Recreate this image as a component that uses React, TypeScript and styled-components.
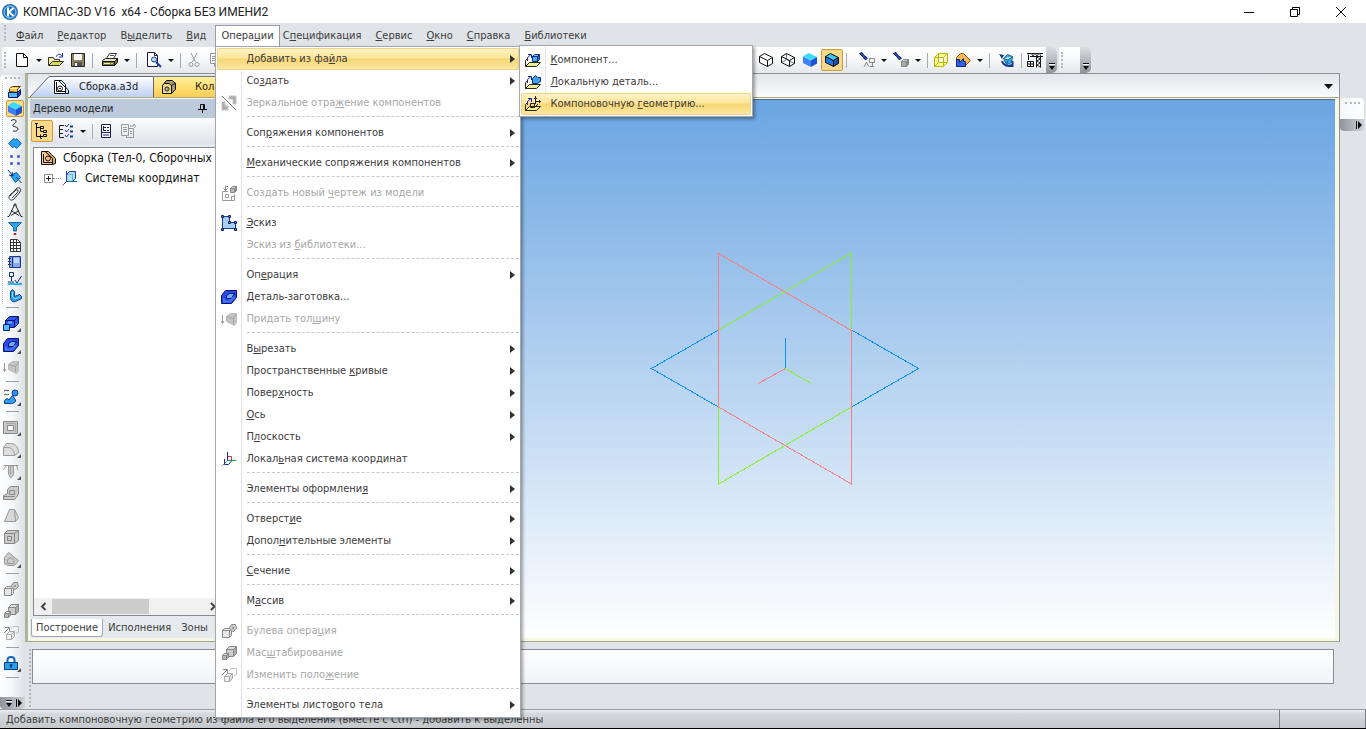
import React from 'react';
import styled, { createGlobalStyle, css } from 'styled-components';

const uiFont = '"DejaVu Sans Condensed", "DejaVu Sans", sans-serif';
const titleFont = 'Roboto, "Noto Sans", sans-serif';

const GlobalStyle = createGlobalStyle`
  * { box-sizing: border-box; }
  body { margin: 0; background: #e0e4e8; }
  button { font: inherit; color: inherit; background: none; border: 0; padding: 0; margin: 0; }
  ul { list-style: none; margin: 0; padding: 0; }
  u { text-decoration: underline; text-underline-offset: 1px; text-decoration-thickness: 1px; }
`;

/* ---------- icons ---------- */

const P = ({ d, f = 'none', s = '#111', w = 1 }: { d: string; f?: string; s?: string; w?: number }) => (
  <path d={d} fill={f} stroke={s} strokeWidth={w} />
);

const box = (x: number, y: number, n: number, d: number, f: string, t: string, r: string, l: string) => (
  <>
    <P d={`M${x} ${y} h${n} v${n} h-${n} Z`} f={f} s={l} />
    <P d={`M${x} ${y} l${d} -${d} h${n} l-${d} ${d} Z`} f={t} s={l} />
    <P d={`M${x + n} ${y} l${d} -${d} v${n} l-${d} ${d} Z`} f={r} s={l} />
  </>
);

const G = '#9a9a9a';

const openFolder = (
  <P d="M.5 14.5 V8.5 L2.5 6.5 M.5 14.5 L4.5 10.5 H15.5 L11.5 14.5 Z" f="#eeee98" s="#2b2b10" />
);

const insertArrow = <P d="M2.5 9 V5.5 L6 2.5 M3 2.5 H6.5 V6" s="#14249c" />;

const icons: Record<string, React.ReactNode> = {
  fileNew: <P d="M2.5 1.5 H9.5 L13.5 5.5 V14.5 H2.5 Z M9.5 1.5 V5.5 H13.5" f="#fff" />,
  open: (
    <>
      <P d="M.5 13.5 V5.5 H5.5 L6.5 7.5 H11.5 V9.5" f="#f4f0a0" s="#333" />
      <P d="M.5 13.5 L4.5 9.5 H15.5 L11.5 13.5 Z" f="#d8d860" s="#333" />
      <P d="M8.5 4.5 C9.5 1.5 12.5 1.5 14.5 4.5 M14.5 1 V5 H11" s="#1428b4" />
    </>
  ),
  save: (
    <>
      <P d="M1.5 1.5 H14.5 V14.5 H1.5 Z" f="#8a8458" s="#222" />
      <P d="M4 2 H12 V8 H4 Z" f="#f4f4f4" s="none" />
      <P d="M4 10 H12 V14 H4 Z" f="#555" s="none" />
      <P d="M5 11 H7 V14 H5 Z" f="#eee" s="none" />
    </>
  ),
  print: (
    <>
      <P d="M4.5 6.5 L7.5 1.5 H14.5 L11.5 6.5 Z" f="#fff" s="#333" />
      <P d="M.5 8.5 L3.5 6.5 H15.5 L12.5 9.5 H.5 Z" f="#e8e8c0" s="#222" />
      <P d="M.5 9.5 H12.5 V13.5 H.5 Z M12.5 9.5 L15.5 6.5 V10.5 L12.5 13.5" f="#777740" s="#111" />
      <P d="M2 11.5 H8" s="#f0f0b0" />
      <P d="M9 11.5 H11" s="#e8d820" />
      <P d="M8 3.5 H12" s="#555" />
    </>
  ),
  preview: (
    <>
      <P d="M1.5 .5 H8.5 L11.5 3.5 V14.5 H1.5 Z M8.5 .5 V3.5 H11.5" f="#fff" s="#1a1a4a" />
      <P d="M5.5 7.5 a2.5 2.5 0 1 0 5 0 a2.5 2.5 0 1 0 -5 0" f="#b8dcff" s="#203c90" />
      <P d="M10 10 L15 15" s="#203c90" w={2} />
    </>
  ),
  cut: (
    <>
      <P d="M5 1 L9.5 10 M11 1 L6.5 10" s={G} />
      <P d="M3 12.5 a2 2 0 1 0 4 0 a2 2 0 1 0 -4 0 M9 12.5 a2 2 0 1 0 4 0 a2 2 0 1 0 -4 0" s={G} />
    </>
  ),
  copy: <P d="M2.5 1.5 H9.5 V11.5 H2.5 Z M4 4.5 H8 M4 6.5 H8 M4 8.5 H8 M9.5 4.5 H13.5 V14.5 H6.5 V12" s={G} />,
  wire: <P d="M1.5 4.5 L6.5 1.5 L14.5 5.5 V11.5 L9.5 14.5 L1.5 10.5 Z M1.5 4.5 L9.5 8.5 V14.5 M9.5 8.5 L14.5 5.5" f="#fff" />,
  wireThin: (
    <>
      <P d="M1.5 10.5 L6.5 7.5 L14.5 11.5 M6.5 7.5 V1.5" s="#777" />
      <P d="M1.5 4.5 L6.5 1.5 L14.5 5.5 V11.5 L9.5 14.5 L1.5 10.5 Z M1.5 4.5 L9.5 8.5 V14.5 M9.5 8.5 L14.5 5.5" />
    </>
  ),
  shaded: (
    <>
      <P d="M1 4.5 L9 8.5 V15 L1 11 Z" f="#3c80f4" s="none" />
      <P d="M1 4.5 L6.5 1 L15 5 L9 8.5 Z" f="#38dcfa" s="none" />
      <P d="M9 8.5 L15 5 V11.5 L9 15 Z" f="#1c50d0" s="none" />
    </>
  ),
  shadedEdges: (
    <>
      <P d="M1.5 4.5 L9.5 8.5 V14.5 L1.5 10.5 Z" f="#2476e8" />
      <P d="M1.5 4.5 L6.5 1.5 L14.5 5.5 L9.5 8.5 Z" f="#38c8f0" />
      <P d="M9.5 8.5 L14.5 5.5 V11.5 L9.5 14.5 Z" f="#1850b8" />
    </>
  ),
  lampText: (
    <>
      <P d="M.5 1.5 L3 .5 L5 3.5 L8.5 6 L6.500 8 L3.500 4.500 Z" f="#2448b0" s="#102878" />
      <P d="M10.5 6.5 H15.5 V10.5 H10.5 Z M13.5 10.5 V15 M10.500 14.500 H15 M5 15 L7.500 10 L9.5 14" s="#888" />
    </>
  ),
  lampCube: (
    <>
      <P d="M.5 1.5 L3 .5 L5 3.5 L8.500 6 L6.500 8 L3.500 4.500 Z" f="#2448b0" s="#102878" />
      {box(8.5, 9.5, 5, 2, '#aaa', '#ccc', '#888', '#888')}
    </>
  ),
  yellowBox: <P d="M1.5 5.5 H10.5 V14.5 H1.5 Z M1.5 5.5 L5.5 1.5 H14.5 L10.5 5.5 M14.5 1.5 V10.5 L10.5 14.5 M5.5 1.5 V10.5 H14.5 M1.5 14.5 L5.5 10.5" f="#fcfc90" s="#bcb800" />,
  sectionView: (
    <>
      <P d="M1.5 14.5 V5.5 L5.5 1.5 H8.5 L15.5 8.5 L9.5 14.5 Z" f="#f4b850" s="#8a5410" />
      <P d="M1.5 14.5 V7.5 H4.5 V10.5 L8.5 6.5 V9.500 H10.500 V14.5 Z" f="#3060e0" s="#102880" />
    </>
  ),
  rotate: (
    <>
      <P d="M4.5 6.5 L8.5 2.5 L13.5 4.5 L12.5 10.5 L7.5 12.5 Z M4.500 6.500 L9 8 L13.500 4.500 M9 8 L7.500 12.500" f="#38a8ec" s="#1464a8" />
      <P d="M0 2 L5 3 L3 7 Z" f="#123f8c" s="none" />
      <P d="M3 9 C4 13 8 15 13 13 M13.500 9 V14 H9" s="#123f8c" w={2} />
    </>
  ),
  crane: (
    <>
      <P d="M1.5 8 V2.5 M0 1.500 H16 M3 4.500 H16" />
      <P d="M9.5 4 V15.500 M13.5 4 V15.500" />
      <P d="M9.500 5 L13.500 7 L9.500 9 L13.500 11 L9.500 13 L13.500 15 M4 1 L6 4 L8 1 L10 4 L12 1 L14 4" s="#333" />
      <P d="M.5 9.5 H6.5 V14.5 H.5 Z M3.5 9.5 V14.5 M.5 12 H6.5" f="#fff" />
    </>
  ),
  assembly: (
    <>
      <P d="M1.5 14.5 V1.5 H5.5 L12.5 8.5 V14.5 Z" f="#fff" />
      <P d="M4.5 9.5 a2.5 2.5 0 1 0 5 0 a2.5 2.5 0 1 0 -5 0 M6 9.5 H8" f="#fff" />
      <P d="M5 1.500 H8.5 L12.500 5.500 V8 L15.5 11.500 V14.5 H12.5 M3.5 3 V12.5 H12" />
    </>
  ),
  assemblyTree: (
    <>
      <P d="M1.5 14.5 V1.5 H5.5 L12.5 8.5 V14.5 Z" f="#f4c890" />
      <P d="M5 1.500 H8.5 L11.500 4.500 L15.5 8.500 V13.5 L12.5 14.500 V8.500 Z" f="#e4a868" />
      <P d="M5.5 8.5 a2.500 2.500 0 1 0 5 0 a2.500 2.500 0 1 0 -5 0" f="#f0c080" />
      <P d="M3.5 4 V12.5 H12" />
    </>
  ),
  part: (
    <>
      <P d="M1.5 14.5 V6.5 L5.5 1.5 H11.5 L14.5 4.5 V10.5 L10.5 14.5 Z" f="#a89868" />
      <P d="M1.5 14.500 V6.5 L3.500 4.5 H8 L10.5 6.5 V14.5 Z M10.5 6.5 L14.5 4" f="#f0d878" />
      <P d="M4 10 a2 2 0 1 0 4 0 a2 2 0 1 0 -4 0 M5.500 10 H7" f="#fff" />
    </>
  ),
  tree: <P d="M1 .500 H4 M2.5 1 V13.5 H6 M2.5 4.5 H6 M6.500 3 V8 M6.500 8.500 H9 M6.500 3.500 H9.500 V5.500 H6.500 M9.5 7.5 H12.5 V9.5 H9.5 Z M9.500 11.500 H12.500 V13.500 H9.500 Z M6.5 11.5 V15.500 H8 M6.500 13.500 H9" />,
  checklist: (
    <>
      <P d="M6 2.5 H1.5 V14.5 H6 M1.5 6.5 H5 M1.5 10.5 H5" s="#222" />
      <P d="M7 2 L8.5 4 L11 1 M7 7 L8.5 9 L11 6 M7 12 L8.5 14 L11 11" s="#203c90" />
      <P d="M12 3.5 H15 M12 8.5 H15 M12 13.5 H15" s="#203c90" w={2} />
    </>
  ),
  docTree: (
    <>
      <P d="M3.5 1.5 H12.5 V14.5 H3.5 Z" f="#fff" s="#181860" />
      <P d="M3.5 9.5 H12.5 M5.5 3 V7.5 H8 M5.5 4.5 H8 M9 4.5 H11 M9 7.5 H11 M5 12 H11" s="#181860" />
    </>
  ),
  docCopy: <P d="M1.5 1.5 H8.5 V12.5 H1.5 Z M3 4.5 H7 M3 6.5 H7 M3 8.5 H7 M8.5 5.5 H13.5 V14.5 H6.5 V13 M10 8.5 H12 M10 10.5 H12 M10 3 H14 V1 L15.5 3.5 L14 5" s={G} />,
  coords: (
    <>
      <P d="M4.5 4.5 L7.5 1.5 H13.5 V8.5 L10.5 11.5 H4.5 Z" f="#b0e0f8" s="#1840a0" />
      <P d="M4.500 4.500 H10.500 V11.500" s="#70a8d8" />
      <P d="M4.5 12 V1" s="#1840c0" />
      <P d="M4.5 11.5 H15" s="#107878" />
      <P d="M4.5 11.5 L.5 15.5" s="#b030a0" />
    </>
  ),
  block: (
    <>
      <P d="M2.500 7.500 V4.500 L5.5 2.5 H13.5 L10.5 5 V8.500 Z" f="#f8c850" s="#583800" />
      <P d="M2.500 4.500 H10.500" s="#fff0a0" />
      <P d="M1.5 8.5 H10.5 V13.5 H1.5 Z" f="#50b8f8" s="#0c1850" />
      <P d="M10.5 8.5 L13.5 5.5 V10.5 L10.5 13.5 Z" f="#2848c8" s="#0c1850" />
    </>
  ),
  curve: <P d="M4 3 C5 1 10 1 9 4 C8 6 5 6 6 8 C8 9 11 9 11 11 C10 14 7 13 6 13" s="#222" />,
  surface: <P d="M1.5 8.5 L6.5 3.5 L8.5 4.5 L9.5 3.5 L14.5 8.5 L9.5 13.5 L7.5 11.5 L5.5 12.5 Z" f="#28a0f0" s="#1868c0" />,
  points: (
    <P d="M3.500 3.500 h2 v2 h-2 Z M10.500 3.500 h2 v2 h-2 Z M3.500 10.500 h2 v2 h-2 Z M10.500 10.500 h2 v2 h-2 Z" f="#2838b0" s="#6878e0" />
  ),
  mate: (
    <>
      <P d="M3.5 6.5 L9.5 3.5 L13.5 8.5 L8.5 13.5 Z" f="#28a8f0" s="#1060a8" />
      <P d="M1 1 L6 7 M14.5 14 L9 8 M5 3 L6 7 L2 6" s="#14307c" />
    </>
  ),
  clip: <P d="M3 10 L9 3 C12 0 15 3 13 6 L7 13 C4 16 0 12 3 9 L9 4 C11 3 12 5 10 7 L5 12" s="#333" />,
  compass: <P d="M7.500 2 L2 13.500 H.500 M8.500 2 L14 13.500 H15.500 M6.500 2.5 L8 .5 L9.500 2.5 M4 7.500 L12 12.500 M12 7.500 L4 12.500" s="#222" />,
  filter: (
    <>
      <P d="M1.5 2.5 H14.5 L9.5 7.5 V11 H6.5 V7.5 Z" f="#30a0e8" s="#1868b0" />
      <P d="M7 13.5 h2 v1 h-2 Z" f="#e04040" s="#c02020" />
    </>
  ),
  grid: (
    <P d="M3.5 2.5 H10.5 L13.5 5.5 V14.5 H3.5 Z M3.5 5.5 H13.5 M3.5 8.5 H13.5 M3.5 11.5 H13.5 M6.5 3 V14 M9.5 3 V14" f="#fff" s="#333" />
  ),
  book: (
    <>
      <P d="M2.5 2.5 H13.5 V13.5 H2.5 Z" f="#88a8f0" s="#20388c" />
      <P d="M5.5 2.5 V13.5" s="#20388c" />
      <P d="M1 4.5 H4 M1 7.5 H4 M1 10.5 H4" s="#333" />
      <P d="M7 4 H12 V9 H7 Z" f="#c4d8fc" s="none" />
    </>
  ),
  measure: (
    <>
      <P d="M2.5 1.5 H6.5 V5.5 H2.5 Z M4.5 6 V10 M1 11 H7 M8 9 L10 12 L14.5 5" s="#182c80" />
      <P d="M1 13.5 C5 11 9 15 15 12.5" s="#28b0e8" w={2} />
    </>
  ),
  bend: (
    <>
      <P d="M3.5 3.500 L5.5 1.5 L7.500 3.500 V8.5 L12.5 6.5 L14.500 8.500 V10.5 L8.5 13.500 C4.5 14.5 3.5 11.5 3.5 9.5 Z" f="#28a0f0" s="#103890" />
      <P d="M5.500 4 V9 L8 11 L13 9" s="#90d8ff" />
    </>
  ),
  extrude: (
    <>
      <P d="M2.500 5.500 L6.500 1.500 H15.500 V8.500 L11.500 12.500 H2.500 Z" f="#2c58ec" s="#081070" />
      <P d="M2.500 5.500 H11.500 V12 M11.500 5.500 L15.500 1.500" s="#081070" />
      <P d="M5 7.500 H9" s="#60b8ff" w={2} />
      <P d="M.5 9.5 H6.5 V15.5 H.5 Z" f="#48c4f8" s="#0c1890" />
    </>
  ),
  blank: (
    <>
      <P d="M.5 6.5 L4.5 1.5 H15.500 V8.5 L10.5 14.5 H.5 Z" f="#2848e8" s="#081070" />
      <P d="M5.5 6.500 L8.500 4.5 H13.5 L10.5 9.5 H5.500 Z" f="#68b0f8" s="#081070" />
      <P d="M3 9.500 V12.500 H9 L13 8" s="#4078f8" w={2} />
    </>
  ),
  thick: (
    <>
      <P d="M1.5 4 V12 M0 10 L1.5 12.5 L3 10" s={G} />
      <P d="M5.5 5.5 L9.5 2.5 H15.5 V11.5 L13.5 14.5 L5.5 10.5 Z" f="#c4c4c4" s="#bbb" />
      <P d="M5.5 5.5 L12.5 7.5 L15.5 3 M12.5 7.5 V13" s="#a4a4a4" />
    </>
  ),
  loft: (
    <>
      <P d="M1 2 C3 0 5 3 6 1 M1 6 C3 4 4 7 6 5" s="#444" />
      <P d="M9 4 a3 3 0 1 0 6 0 a3 3 0 1 0 -6 0" f="#2890f0" s="#104090" />
      <P d="M1.5 14.5 V11.500 L4 9.500 L6 11 L9.5 6.5 L12.500 11 C13 14 9 15 6 14.5 Z" f="#30a0f0" s="#103c90" />
    </>
  ),
  window: (
    <>
      <P d="M.5 2.5 H14.5 V14.5 H.5 Z" f="#c8c8c8" s="#888" />
      <P d="M4.5 6.500 H10.5 V11.5 H4.5 Z" f="#f4f4f4" s="#888" />
      <P d="M3 4.500 H12.500 V13" s="#aaa" />
    </>
  ),
  fillet: <P d="M.5 14.5 V6.5 L3.500 2.500 H7.500 C12.500 2.500 15.500 6.500 15.500 11.500 L11.500 14.5 Z M.5 6.5 H4.5 C8.5 6.5 11.5 9.5 11.5 14.5" f="#ddd" s="#999" />,
  hole: <P d="M.5 2.5 H15.5 M.5 6.5 L3.5 2.5 M5.5 3 V11.5 L8 15 L10.5 11.5 V3 Z M13.5 3 L15 7 M7.500 4 V11" f="#ccc" s={G} />,
  rib: <P d="M.5 10.5 L4.5 8.5 V4.5 L7.5 1.5 H15.5 V9.5 L11.5 14.5 H.5 Z M6.5 5.500 H11.5 V9.5 H6.5 Z M.5 11.5 H11.5" f="#ccc" s="#888" />,
  draft: <P d="M1.5 14.5 L6.5 2.5 H11.5 L15.5 10.5 L12.5 14.5 Z M11.5 2.5 L12.5 14" f="#d8d8d8" s="#999" />,
  shell: <P d="M1.5 4.5 L4.5 1.5 H15.5 V11.5 L11.5 14.5 H1.5 Z M1.5 4.5 H11.5 V14.5 M11.5 4.5 L15.5 1.5 M4.5 7.5 H8.5 V11.5 H4.5 Z" f="#ccc" s="#888" />,
  cutPlane: <P d="M1.5 12.5 V6.5 L5.5 1.5 L15.5 9.5 L11.5 14.5 H4.5 Z M4.5 8.5 L8 6.5 L11 9.5 V12.5 H4.5 Z" f="#ccc" s="#999" />,
  boolean: (
    <>
      <P d="M1.5 7.5 L3.5 5.5 H10.5 V12.5 L8.5 14.5 H1.5 Z M1.5 7.5 H8.5 V14" f="#e8e8e8" s="#888" />
      <P d="M8.5 4.5 L10.5 1.5 L14.5 1.5 L15.5 5.5 L12.5 8.5 L9.5 7.5 Z M11.500 4.500 h1 v1 h-1 Z" f="#ccc" s="#888" />
    </>
  ),
  scale: (
    <>
      {box(5.5, 4.5, 7, 3, '#ccc', '#ddd', '#aaa', '#888')}
      {box(1.5, 10.5, 4, 2, '#bbb', '#ddd', '#aaa', '#888')}
    </>
  ),
  move: (
    <>
      <P d="M1 8 L6 3 M2 2.500 H6.500 V7" s="#888" />
      <P d="M8.5 3.5 L10 1.500 H15.5 V7.5 L13 8.500" s="#bbb" />
      {box(3.5, 9.5, 5, 3, '#eee', '#eee', '#ddd', '#aaa')}
    </>
  ),
  lock: (
    <>
      <P d="M4.5 8 V5 C4.5 1 11.5 1 11.5 5 V8" s="#1868b8" w={2} />
      <P d="M1.5 7.5 H14.5 V14.5 H1.5 Z" f="#28a0f4" s="#103c80" />
      <P d="M6.500 10 H9.500 M8 10 V13" s="#111" />
    </>
  ),
  mirror: (
    <>
      <P d="M1 1 L15 15" s="#777" />
      <P d="M8 1 H15 V9 H12 V4 H8 Z M1 7 H4 V11 H7 V15 H1 Z" f="#aaa" s="#c4c4c4" />
    </>
  ),
  drawing: (
    <>
      {box(9.5, 3.5, 4, 2, '#bbb', '#ddd', '#999', '#888')}
      <P d="M7 1.500 H4.500 V5 M2.5 3.5 L4.500 5.5 L6.5 3.5" s="#888" />
      <P d="M1.5 6.500 H7 M1.5 6.5 V15.5 H13.5 V9 M4.5 9.5 H7.5 V12.5 H4.5 Z M10 11.5 H13 M10.500 11.5 V15" s="#999" />
    </>
  ),
  sketch: (
    <>
      <P d="M1.5 1.5 H8.5 V7.5 H14.5 V13.5 H1.5 Z" f="#a8d0f4" s="#203c90" />
      <P d="M.500 .500 h2 v2 h-2 Z M7.5 .5 h2 v2 h-2 Z M7.5 6.5 h2 v2 h-2 Z M13.5 6.5 h2 v2 h-2 Z M13.5 13.5 h2 v2 h-2 Z M.5 13.5 h2 v2 h-2 Z" f="#5888e0" s="#10205c" />
    </>
  ),
  lcs: (
    <>
      <P d="M6.500 9.500 L1 15" s="#888" />
      <P d="M6.500 9.500 H15.500" s="#20a040" />
      <P d="M6.500 5.500 H10.500 V9.500" s="#d03050" />
      <P d="M6.500 1 V9.500 M3.500 8 V13.500 H7.500 L10.500 10" s="#1828a0" />
    </>
  ),
  addComponent: (
    <>
      {openFolder}
      {insertArrow}
      {box(7.5, 4.5, 5, 2, '#50b0f8', '#80d0ff', '#2068c8', '#102c80')}
    </>
  ),
  addLocal: (
    <>
      {openFolder}
      {insertArrow}
      <P d="M7.5 4.5 L10.5 1.5 L12.5 3.5 L15.5 3.5 V7.5 L12.5 9.5 H7.5 Z" f="#40a0f4" s="#102c80" />
    </>
  ),
  addLayout: (
    <>
      {openFolder}
      {insertArrow}
      <P d="M5.5 7.5 H9.5 V11.5 H5.5 Z M10.5 8 V0 M9 2.5 H12 M10 5.5 H16 M14.500 4 V7 M9.500 11.500 L13 8" s="#222" />
    </>
  ),
};

const IconSvg = styled.svg`
  display: block;
  flex: none;
  width: 16px;
  height: 16px;
`;

const Icon = ({ name }: { name: string }) => (
  <IconSvg viewBox="0 0 16 16" aria-hidden="true">
    {icons[name]}
  </IconSvg>
);

/* ---------- title bar ---------- */

const Page = styled.div`
  display: flex;
  flex-direction: column;
  min-height: 100vh;
  overflow: hidden;
  background: #e0e4e8;
  border-bottom: 1px solid #000;
  font: 11px/14px ${uiFont};
  color: #3c3c3c;
  cursor: default;
`;

const TitleBar = styled.header`
  display: flex;
  align-items: center;
  height: 23px;
  padding: 0 2px;
  background: #fff;
`;

const AppLogo = styled.svg`
  width: 16px;
  height: 16px;
`;

const Title = styled.h1`
  flex: 1;
  margin: 0 0 0 5px;
  font: 400 12px/16px ${titleFont};
  color: #222;
  white-space: pre;
`;

const WindowButton = styled.button`
  display: flex;
  align-items: center;
  justify-content: center;
  width: 46px;
  height: 22px;
`;

/* ---------- menus ---------- */

const MenuBar = styled.nav`
  display: flex;
  height: 24px;
  padding: 2px 0 0 4px;
`;

const Grip = styled.span<{ $horizontal?: boolean }>`
  flex: none;
  ${(p) =>
    p.$horizontal
      ? css`
          width: 15px;
          border-top: 2px dotted #b4b8be;
        `
      : css`
          height: 16px;
          border-left: 2px dotted #b4b8be;
        `}
`;

const MenuList = styled.div`
  display: flex;
  margin-left: 3px;
`;

const MenuEntry = styled.div<{ $open?: boolean }>`
  position: relative;
  margin: ${(p) => (p.$open ? '0 -4px 0 2px' : '0')};
`;

const MenuButton = styled.button<{ $open?: boolean }>`
  height: 22px;
  padding: 0 6px 2px;
  border: 1px solid transparent;
  border-bottom: 0;
  white-space: nowrap;
  ${(p) =>
    p.$open &&
    css`
      padding: 0 5px 2px;
      background: #fff;
      border-color: #9a9ea4;
    `}
`;

const Popup = styled.div<{ $submenu?: boolean }>`
  position: absolute;
  z-index: 10;
  top: ${(p) => (p.$submenu ? '-3px' : '21px')};
  left: ${(p) => (p.$submenu ? '100%' : '0')};
  width: ${(p) => (p.$submenu ? '234px' : '306px')};
  padding: ${(p) => (p.$submenu ? '3px 1px 1px' : '1px')};
  background: linear-gradient(90deg, #fff 25px, #e4e4e4 25px, #e4e4e4 26px, #fff 26px);
  border: 1px solid #a4a8ae;
  box-shadow: 2px 2px 3px rgba(0, 0, 0, 0.35);
`;

const MenuRow = styled.li`
  position: relative;
`;

const MenuItem = styled.button<{ $hot?: boolean; $muted?: boolean }>`
  display: flex;
  align-items: center;
  width: 100%;
  height: 22px;
  padding: 0 3px;
  border: 1px solid transparent;
  border-radius: 2px;
  text-align: left;
  white-space: nowrap;
  color: ${(p) => (p.$muted ? '#a8a8a8' : '#3c3c3c')};
  ${(p) =>
    p.$hot &&
    css`
      border-color: #ecd58c;
      background: linear-gradient(#fff2c4, #fce59a 45%, #f6d674 50%, #fbe7a0);
    `}
`;

const MenuIconSlot = styled.span`
  width: 16px;
  height: 16px;
  margin-right: 9px;
`;

const MenuText = styled.span`
  flex: 1;
`;

const MenuDivider = styled.li`
  height: 8px;
  margin-left: 30px;
  padding-top: 2px;

  &::before {
    content: '';
    display: block;
    border-top: 1px dashed #c8c8c8;
  }
`;

const Mnemonic = ({ text }: { text: string }) => {
  const at = text.indexOf('&');
  if (at < 0) return <>{text}</>;
  return (
    <>
      {text.slice(0, at)}
      <u>{text[at + 1]}</u>
      {text.slice(at + 2)}
    </>
  );
};

type Item = { label: string; icon?: string; sub?: boolean; off?: boolean; children?: Item[] };

const addFromFile: Item[] = [
  { label: '&Компонент...', icon: 'addComponent' },
  { label: '&Локальную деталь...', icon: 'addLocal' },
  { label: 'Компоновочную &геометрию...', icon: 'addLayout' },
];

const operations: (Item | null)[] = [
  { label: 'Добавить из фа&йла', sub: true, children: addFromFile },
  { label: 'Со&здать', sub: true },
  { label: 'Зеркальное отра&жение компонентов', icon: 'mirror', off: true },
  null,
  { label: 'Соп&ряжения компонентов', sub: true },
  null,
  { label: '&Механические сопряжения компонентов', sub: true },
  null,
  { label: 'Создать новый &чертеж из модели', icon: 'drawing', off: true },
  null,
  { label: '&Эскиз', icon: 'sketch' },
  { label: 'Эскиз из &библиотеки...', off: true },
  null,
  { label: 'Оп&ерация', sub: true },
  { label: '&Деталь-заготовка...', icon: 'blank' },
  { label: 'Придать тол&щину', icon: 'thick', off: true },
  null,
  { label: 'В&ырезать', sub: true },
  { label: 'Пространственные &кривые', sub: true },
  { label: 'Повер&хность', sub: true },
  { label: '&Ось', sub: true },
  { label: 'П&лоскость', sub: true },
  { label: 'Локал&ьная система координат', icon: 'lcs' },
  null,
  { label: 'Элементы оформлени&я', sub: true },
  null,
  { label: 'Отверст&ие', sub: true },
  { label: 'Допол&нительные элементы', sub: true },
  null,
  { label: '&Сечение', sub: true },
  null,
  { label: 'М&ассив', sub: true },
  null,
  { label: 'Булева опера&ция', icon: 'boolean', off: true },
  { label: 'Мас&штабирование', icon: 'scale', off: true },
  { label: 'Изменить поло&жение', icon: 'move', off: true },
  null,
  { label: 'Элементы листо&вого тела', sub: true },
];

const Arrow = () => (
  <svg width="5" height="8" viewBox="0 0 5 8" aria-hidden="true">
    <path d="M0 0 L5 4 L0 8 Z" fill="#333" />
  </svg>
);

const OperationsMenu = () => (
  <Popup>
    <ul>
      {operations.map((item, i) =>
        item ? (
          <MenuRow key={i}>
            <MenuItem $hot={!!item.children} $muted={item.off} disabled={item.off}>
              <MenuIconSlot>{item.icon && <Icon name={item.icon} />}</MenuIconSlot>
              <MenuText>
                <Mnemonic text={item.label} />
              </MenuText>
              {item.sub && <Arrow />}
            </MenuItem>
            {item.children && (
              <Popup $submenu as="ul">
                {item.children.map((child, n) => (
                  <MenuRow key={child.label}>
                    <MenuItem $hot={n === 2}>
                      <MenuIconSlot>
                        <Icon name={child.icon!} />
                      </MenuIconSlot>
                      <MenuText>
                        <Mnemonic text={child.label} />
                      </MenuText>
                    </MenuItem>
                  </MenuRow>
                ))}
              </Popup>
            )}
          </MenuRow>
        ) : (
          <MenuDivider key={i} />
        ),
      )}
    </ul>
  </Popup>
);

const openMenu = 'Опера&ции';
const menus = ['&Файл', '&Редактор', 'В&ыделить', '&Вид', openMenu, 'С&пецификация', '&Сервис', '&Окно', '&Справка', '&Библиотеки'];

/* ---------- toolbars ---------- */

const ToolRow = styled.div`
  display: flex;
  gap: 2px;
  height: 26px;
  padding-left: 2px;
`;

const ToolStrip = styled.div`
  display: flex;
  align-items: center;
  padding-left: 2px;
  background: linear-gradient(#fff, #f7f8fa 50%, #e4e7eb);
  border-radius: 3px 5px 5px 3px;
`;

const HandleGap = styled.span<{ $wide?: boolean }>`
  flex: none;
  width: ${(p) => (p.$wide ? '17px' : '5px')};
`;

const StripEnd = styled.button`
  display: flex;
  align-items: flex-end;
  justify-content: center;
  align-self: stretch;
  width: 11px;
  padding-bottom: 3px;
  background: linear-gradient(#dcdee2, #8f949b);
  border-radius: 0 5px 5px 0;
`;

const ToolButton = styled.button<{ $active?: boolean; $small?: boolean; $more?: boolean }>`
  position: relative;
  display: flex;
  flex: none;
  align-items: center;
  justify-content: center;
  width: 22px;
  height: ${(p) => (p.$small ? '17px' : '22px')};
  border: 1px solid ${(p) => (p.$active ? '#d09a38' : 'transparent')};
  border-radius: 2px;
  background: ${(p) => (p.$active ? '#fbd98a' : 'none')};

  ${(p) =>
    p.$small &&
    css`
      width: 18px;
    `}

  ${(p) =>
    p.$more &&
    css`
      &::after {
        content: '';
        position: absolute;
        right: 0;
        bottom: 1px;
        border: 2px solid transparent;
        border-right-color: #555;
        border-bottom-color: #555;
      }
    `}
`;

const DropButton = styled.button`
  display: flex;
  justify-content: center;
  flex: none;
  width: 12px;
  padding: 8px 0;
`;

const ToolDivider = styled.span<{ $after?: number }>`
  flex: none;
  width: 1px;
  height: 15px;
  margin: 0 ${(p) => p.$after ?? 6}px 0 3px;
  background: #a8acb2;
`;

const HiddenTools = styled.div`
  flex: none;
  width: 528px;
`;

const Down = ({ size = 6 }: { size?: number }) => (
  <svg width={size} height={Math.ceil(size / 2)} viewBox="0 0 8 4" preserveAspectRatio="none" aria-hidden="true">
    <path d="M0 0 H8 L4 4 Z" fill="#111" />
  </svg>
);

const MoreMark = () => (
  <svg width="6" height="7" viewBox="0 0 6 7" aria-hidden="true">
    <path d="M0 1.500 H6" stroke="#fff" />
    <path d="M0 .5 H6" stroke="#111" />
    <path d="M0 3 H6 L3 7 Z" fill="#111" />
  </svg>
);

const Tool = ({ name, active, drop }: { name: string; active?: boolean; drop?: boolean }) => (
  <>
    <ToolButton $active={active} aria-label={name}>
      <Icon name={name} />
    </ToolButton>
    {drop && (
      <DropButton aria-label={`${name} menu`}>
        <Down />
      </DropButton>
    )}
  </>
);

/* ---------- workspace ---------- */

const Workspace = styled.main`
  flex: 1;
  display: grid;
  grid-template-columns: 25px minmax(0, 1fr) 26px;
`;

const SideBar = styled.aside`
  display: flex;
  flex-direction: column;
  width: 25px;
  margin-top: 2px;
  border-radius: 4px 4px 0 0;
  background: linear-gradient(90deg, #fff, #f4f6f8 50%, #dde1e7);
`;

const SideGrip = styled.div`
  display: flex;
  justify-content: center;
  height: 8px;
  padding-top: 2px;
`;

const SideGroup = styled.div<{ $first?: boolean }>`
  display: flex;
  flex-direction: column;
  ${(p) =>
    p.$first
      ? css`
          margin: 0 1px 0 2px;
          border-left: 1px dotted #b8bcc2;
          align-items: flex-end;
        `
      : css`
          &::before {
            content: '';
            height: 1px;
            margin: 3px 6px 4px;
            background: #9a9ea4;
          }
        `}
`;

const SideEnd = styled.div`
  display: flex;
  align-items: center;
  justify-content: flex-end;
  gap: 4px;
  height: 12px;
  margin-top: auto;
  padding-right: 3px;
  border-radius: 0 0 4px 4px;
  background: linear-gradient(90deg, #8f949b, #d0d3d8);
`;

const Center = styled.div`
  display: flex;
  flex-direction: column;
`;

const DocumentFrame = styled.section`
  flex: 1;
  display: flex;
  flex-direction: column;
  border: 1px solid #8e9298;
  border-left: 3px solid #acb4a2;
  border-bottom-color: #a2a688;
`;

const TabStrip = styled.div`
  display: flex;
  height: 23px;
  padding-top: 2px;
  background: linear-gradient(#e2e6ea, #fafbfc);
`;

const ActiveTab = styled.button`
  position: relative;
  display: flex;
  align-items: center;
  width: 126px;
  padding-left: 25px;
  color: #222;
`;

const TabShape = styled.svg`
  position: absolute;
  inset: 0;
  width: 126px;
  height: 21px;
`;

const TabLabel = styled.span`
  position: relative;
  display: flex;
  align-items: center;
  gap: 10px;
`;

const OtherTab = styled.button`
  display: flex;
  align-items: center;
  gap: 18px;
  width: 130px;
  padding-left: 7px;
  color: #222;
  white-space: nowrap;
  border-top: 1px solid #777;
  background: linear-gradient(#fff0a0, #ffdc6c 60%, #f8cc58);
`;

const ListButton = styled.button`
  display: flex;
  align-items: center;
  margin: 0 6px 0 auto;
`;

const Body = styled.div`
  flex: 1;
  display: flex;
  padding: 1px 4px 3px 2px;
  border-top: 1px solid #b0a678;
  background: #f6f8e4;
`;

const TreePanel = styled.section`
  display: flex;
  flex-direction: column;
  width: 205px;
  background: #e6eaee;
`;

const PanelHeader = styled.h2`
  display: flex;
  align-items: center;
  gap: 85px;
  height: 19px;
  margin: 0;
  padding-left: 3px;
  background: #bccadb;
  font: inherit;
  color: #222;
  white-space: nowrap;
`;

const PanelTools = styled.div`
  display: flex;
  align-items: center;
  height: 26px;
  padding-left: 1px;
  background: linear-gradient(#fbfcfd, #dfe3ea);
`;

const ToolGap = styled.span`
  width: 2px;
`;

const TreeBox = styled.div`
  flex: 1;
  display: flex;
  flex-direction: column;
  margin: 3px 0 3px 3px;
  border: 1px solid #85898f;
  background: #fff;
  font-size: 12px;
  color: #111;
`;

const Tree = styled.ul`
  flex: 1;
`;

const TreeRow = styled.li<{ $nested?: boolean }>`
  display: flex;
  align-items: center;
  gap: 7px;
  height: 20px;
  padding-left: ${(p) => (p.$nested ? '10px' : '6px')};
  white-space: nowrap;
`;

const Branch = styled.span`
  display: flex;
  align-items: center;
  margin-right: -6px;

  &::after {
    content: '';
    width: 8px;
    border-top: 1px dotted #888;
  }
`;

const ScrollBar = styled.div`
  display: flex;
  align-items: center;
  gap: 4px;
  height: 17px;
  padding-left: 5px;
  background: #f0f0f0;
`;

const ScrollThumb = styled.div`
  width: 97px;
  height: 15px;
  margin-right: 56px;
  background: #cdcdcd;
`;

const PanelTabs = styled.div`
  display: flex;
  height: 19px;
  padding-left: 1px;
`;

const PanelTab = styled.button<{ $active?: boolean }>`
  height: 18px;
  padding: 1px 4px 0;
  border: 1px solid transparent;
  border-top: 0;
  border-radius: 0 0 3px 3px;
  ${(p) =>
    p.$active &&
    css`
      background: #fff;
      border-color: #a4a8ae;
    `}
`;

const Viewport = styled.div`
  flex: 1;
  display: flex;
  align-items: center;
  justify-content: center;
  border-top: 1px solid #4c6c94;
  background: linear-gradient(#6aa5e2, #fff);
`;

const Bottom = styled.div`
  display: flex;
  gap: 1px;
  height: 67px;
  padding: 7px 6px 0 4px;
`;

const BottomGrip = styled.span`
  height: 58px;
  border-left: 2px dotted #b4b8be;
`;

const PropertyPanel = styled.div`
  flex: 1;
  height: 35px;
  border: 1px solid #8a8e94;
  background: linear-gradient(#fff, #f0f4f8);
`;

const RightStub = styled.div`
  width: 24px;
  margin-top: 25px;
`;

const StubBody = styled.div`
  display: flex;
  justify-content: center;
  height: 21px;
  padding-top: 4px;
  border-radius: 4px 4px 0 0;
  background: linear-gradient(90deg, #f4f6f8, #fff);
`;

const StubEnd = styled.button`
  display: flex;
  align-items: center;
  justify-content: flex-end;
  width: 24px;
  height: 12px;
  padding-right: 2px;
  border-radius: 0 0 4px 4px;
  background: linear-gradient(90deg, #8f949b, #d0d3d8);
`;

const StatusBar = styled.footer`
  display: flex;
  justify-content: space-between;
  height: 19px;
  border-top: 1px solid #9a9ea4;
  background: linear-gradient(#eceef0, #d6d9dd 20%, #c4c8cc);
`;

const StatusText = styled.p`
  margin: 0;
  padding: 3px 0 0 6px;
  white-space: nowrap;
`;

const StatusCell = styled.div`
  width: 87px;
  border: solid #7c8086;
  border-width: 0 1px;
`;

const StepMark = () => (
  <svg width="6" height="8" viewBox="0 0 6 8" aria-hidden="true">
    <path d="M.5 0 V8" stroke="#111" />
    <path d="M2 0 L6 4 L2 8 Z" fill="#111" />
  </svg>
);

const smallTools = ['block', 'shaded', 'curve', 'surface', 'points', 'mate', 'clip', 'compass', 'filter', 'grid', 'book', 'measure', 'bend'];
const sideGroups: [string, boolean][][] = [
  [['extrude', true], ['blank', true], ['thick', false]],
  [['loft', true]],
  [['window', true], ['fillet', true], ['hole', true], ['rib', false], ['draft', false], ['shell', false], ['cutPlane', true]],
  [['boolean', false], ['scale', false], ['move', false]],
  [['lock', true]],
  [],
];

const Planes = () => (
  <svg width="270" height="234" viewBox="0 0 270 234" fill="none" shapeRendering="crispEdges" aria-label="Плоскости">
    <path d="M68.500 78 L1.500 116.500 L68.500 155 M201.500 78 L268.500 116.500 L201.500 155 M135.500 86 V116" stroke="#0a90f0" />
    <path d="M201.500 78 V1 L68.500 78 M68.500 155 V232 L201.500 155 M135.500 116.500 L161 131.500" stroke="#86f030" />
    <path d="M68.500 155 V1.500 L201.500 78.500 V232 L68.500 155 M135.500 116.500 L108 131.500" stroke="#f88080" />
  </svg>
);

export default function App() {
  return (
    <Page>
      <GlobalStyle />
      <TitleBar>
        <AppLogo viewBox="0 0 16 16" aria-hidden="true">
          <circle cx="8" cy="8" r="8" fill="#1c74bc" />
          <circle cx="8" cy="8" r="6" fill="none" stroke="#a8d4f4" />
          <path d="M6 3.500 V12.500 M11.500 4 L7 8 L11.500 12" fill="none" stroke="#fff" strokeWidth="2" />
        </AppLogo>
        <Title>КОМПАС-3D V16  x64 - Сборка БЕЗ ИМЕНИ2</Title>
        <WindowButton aria-label="Свернуть">
          <svg width="10" height="10" viewBox="0 0 10 10"><path d="M0 5.500 H10" stroke="#000" /></svg>
        </WindowButton>
        <WindowButton aria-label="Восстановить">
          <svg width="10" height="10" viewBox="0 0 10 10"><path d="M.5 2.500 H7.500 V9.500 H.5 Z M2.500 2 V.5 H9.500 V7.500 H8" fill="none" stroke="#000" /></svg>
        </WindowButton>
        <WindowButton aria-label="Закрыть">
          <svg width="10" height="10" viewBox="0 0 10 10"><path d="M0 0 L10 10 M10 0 L0 10" stroke="#000" /></svg>
        </WindowButton>
      </TitleBar>

      <MenuBar>
        <Grip />
        <MenuList>
          {menus.map((m) => (
            <MenuEntry key={m} $open={m === openMenu}>
              <MenuButton $open={m === openMenu}>
                <Mnemonic text={m} />
              </MenuButton>
              {m === openMenu && <OperationsMenu />}
            </MenuEntry>
          ))}
        </MenuList>
      </MenuBar>

      <ToolRow>
        <ToolStrip>
          <Grip />
          <HandleGap />
          <Tool name="fileNew" drop />
          <Tool name="open" />
          <Tool name="save" />
          <ToolDivider />
          <Tool name="print" drop />
          <ToolDivider />
          <Tool name="preview" drop />
          <ToolDivider $after={2} />
          <Tool name="cut" />
          <Tool name="copy" />
          <HiddenTools />
          <Tool name="wire" />
          <Tool name="wireThin" />
          <Tool name="shaded" />
          <Tool name="shadedEdges" active />
          <ToolDivider $after={9} />
          <Tool name="lampText" drop />
          <Tool name="lampCube" drop />
          <ToolDivider $after={2} />
          <Tool name="yellowBox" />
          <Tool name="sectionView" drop />
          <ToolDivider />
          <Tool name="rotate" />
          <ToolDivider $after={2} />
          <Tool name="crane" />
          <StripEnd aria-label="Параметры панели">
            <MoreMark />
          </StripEnd>
        </ToolStrip>
        <ToolStrip>
          <Grip />
          <HandleGap $wide />
          <StripEnd aria-label="Параметры панели">
            <MoreMark />
          </StripEnd>
        </ToolStrip>
      </ToolRow>

      <Workspace>
        <SideBar>
          <SideGrip>
            <Grip $horizontal />
          </SideGrip>
          <SideGroup $first>
            {smallTools.map((name, i) => (
              <ToolButton key={name} $small $active={i === 1} aria-label={name}>
                <Icon name={name} />
              </ToolButton>
            ))}
          </SideGroup>
          {sideGroups.map((group, i) => (
            <SideGroup key={i}>
              {group.map(([name, more]) => (
                <ToolButton key={name} $more={more} aria-label={name}>
                  <Icon name={name} />
                </ToolButton>
              ))}
            </SideGroup>
          ))}
          <SideEnd>
            <MoreMark />
            <StepMark />
          </SideEnd>
        </SideBar>

        <Center>
          <DocumentFrame>
            <TabStrip>
              <ActiveTab>
                <TabShape viewBox="0 0 126 21" aria-hidden="true">
                  <defs>
                    <linearGradient id="tab" x1="0" y1="0" x2="0" y2="1">
                      <stop offset="0" stopColor="#fff" />
                      <stop offset="1" stopColor="#bcd0f4" />
                    </linearGradient>
                  </defs>
                  <path d="M2 21 L21 .5 H125.500 V21" fill="url(#tab)" stroke="#666" />
                </TabShape>
                <TabLabel>
                  <Icon name="assembly" />
                  Сборка.a3d
                </TabLabel>
              </ActiveTab>
              <OtherTab>
                <Icon name="part" />
                Кол
              </OtherTab>
              <ListButton aria-label="Список документов">
                <Down size={9} />
              </ListButton>
            </TabStrip>
            <Body>
              <TreePanel>
                <PanelHeader>
                  Дерево модели
                  <svg width="9" height="9" viewBox="0 0 9 9" aria-hidden="true">
                    <path d="M2.500 5 V.5 H6.500 V5 M5.500 1 V5 M0 5.500 H9 M4.500 6 V9" fill="none" stroke="#111" />
                  </svg>
                </PanelHeader>
                <PanelTools>
                  <Tool name="tree" active />
                  <ToolGap />
                  <Tool name="checklist" drop />
                  <ToolDivider $after={2} />
                  <Tool name="docTree" />
                  <Tool name="docCopy" />
                </PanelTools>
                <TreeBox>
                  <Tree>
                    <TreeRow>
                      <Icon name="assemblyTree" />
                      Сборка (Тел-0, Сборочных
                    </TreeRow>
                    <TreeRow $nested>
                      <Branch>
                        <svg width="9" height="9" viewBox="0 0 9 9" aria-hidden="true">
                          <path d="M.5 .5 H8.500 V8.500 H.5 Z" fill="#fff" stroke="#888" />
                          <path d="M2 4.500 H7 M4.500 2 V7" stroke="#222" />
                        </svg>
                      </Branch>
                      <Icon name="coords" />
                      Системы координат
                    </TreeRow>
                  </Tree>
                  <ScrollBar>
                    <svg width="9" height="9" viewBox="0 0 9 9" aria-hidden="true"><path d="M6.500 1 L3 4.500 L6.500 8" fill="none" stroke="#444" strokeWidth="2" /></svg>
                    <ScrollThumb />
                    <svg width="9" height="9" viewBox="0 0 9 9" aria-hidden="true"><path d="M2 1 L5.500 4.500 L2 8" fill="none" stroke="#444" strokeWidth="2" /></svg>
                  </ScrollBar>
                </TreeBox>
                <PanelTabs>
                  <PanelTab $active>Построение</PanelTab>
                  <PanelTab>Исполнения</PanelTab>
                  <PanelTab>Зоны</PanelTab>
                </PanelTabs>
              </TreePanel>
              <Viewport>
                <Planes />
              </Viewport>
            </Body>
          </DocumentFrame>
          <Bottom>
            <BottomGrip />
            <PropertyPanel />
          </Bottom>
        </Center>

        <RightStub>
          <StubBody>
            <Grip $horizontal />
          </StubBody>
          <StubEnd aria-label="Развернуть панель">
            <StepMark />
          </StubEnd>
        </RightStub>
      </Workspace>

      <StatusBar>
        <StatusText>Добавить компоновочную геометрию из файла его выделения (вместе с Ctrl) - добавить к выделенны</StatusText>
        <StatusCell />
      </StatusBar>
    </Page>
  );
}
